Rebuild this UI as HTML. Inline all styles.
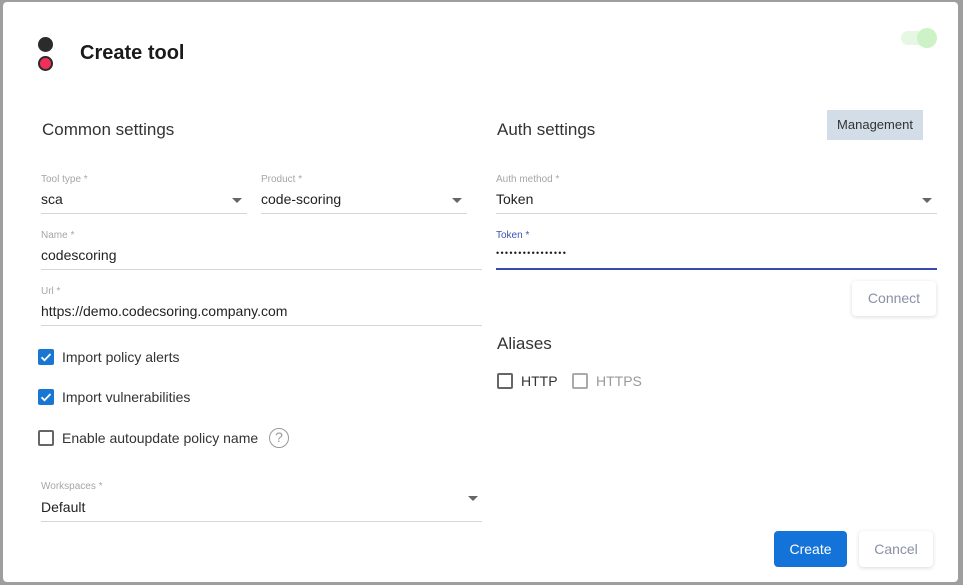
<!DOCTYPE html>
<html><head><style>
*{margin:0;padding:0;box-sizing:border-box}
body{width:963px;height:585px;background:#9e9e9e;font-family:"Liberation Sans",Roboto,sans-serif;position:relative;overflow:hidden}
.dlg{position:absolute;left:3px;top:2px;width:955px;height:580px;background:#fff;border-radius:4px}
.a{position:absolute}
.lbl{font-size:10px;color:#a6a6a6}
.val{font-size:14px;color:#222}
.ul{height:1px;background:#d6d6d6}
.arr{width:0;height:0;border-left:5px solid transparent;border-right:5px solid transparent;border-top:5px solid #666}
.h{font-size:17px;color:#333}
.cb{width:16px;height:16px;border-radius:2px}
.cbx{border:2px solid #666}
.cbon{background:#1976d2}
.t{font-size:14px;color:#333}
</style></head><body>
<div class="dlg"></div>
<div class="a" style="left:38px;top:37px;width:15px;height:15px;border-radius:50%;background:#2b2b2b"></div>
<div class="a" style="left:38px;top:56px;width:15px;height:15px;border-radius:50%;background:#f0305a;border:2px solid #2b2b2b"></div>
<div class="a" style="left:80px;top:42px;font-size:20px;font-weight:bold;color:#1a1a1a">Create tool</div>
<div class="a" style="left:901px;top:31px;width:30px;height:14px;border-radius:7px;background:#e6f7e3"></div>
<div class="a" style="left:917px;top:28px;width:20px;height:20px;border-radius:50%;background:#ccf2c6"></div>

<div class="a h" style="left:42px;top:120px">Common settings</div>
<div class="a h" style="left:497px;top:120px">Auth settings</div>
<div class="a" style="left:827px;top:110px;width:96px;height:30px;background:#d3dde8;font-size:13px;color:#333;text-align:center;line-height:30px">Management</div>

<div class="a lbl" style="left:41px;top:174px">Tool type *</div>
<div class="a val" style="left:41px;top:191px">sca</div>
<div class="a arr" style="left:232px;top:198px"></div>
<div class="a ul" style="left:41px;top:213px;width:206px"></div>
<div class="a lbl" style="left:261px;top:174px">Product *</div>
<div class="a val" style="left:261px;top:191px">code-scoring</div>
<div class="a arr" style="left:452px;top:198px"></div>
<div class="a ul" style="left:261px;top:213px;width:206px"></div>

<div class="a lbl" style="left:41px;top:230px">Name *</div>
<div class="a val" style="left:41px;top:247px">codescoring</div>
<div class="a ul" style="left:41px;top:269px;width:441px"></div>
<div class="a lbl" style="left:41px;top:286px">Url *</div>
<div class="a val" style="left:41px;top:303px">https://demo.codecsoring.company.com</div>
<div class="a ul" style="left:41px;top:325px;width:441px"></div>

<div class="a cb cbon" style="left:38px;top:349px"><svg width="16" height="16"><path d="M3.5 8.2l3 3 6-6.2" stroke="#fff" stroke-width="1.8" fill="none"/></svg></div>
<div class="a t" style="left:62px;top:349px">Import policy alerts</div>
<div class="a cb cbon" style="left:38px;top:389px"><svg width="16" height="16"><path d="M3.5 8.2l3 3 6-6.2" stroke="#fff" stroke-width="1.8" fill="none"/></svg></div>
<div class="a t" style="left:62px;top:389px">Import vulnerabilities</div>
<div class="a cb cbx" style="left:38px;top:430px"></div>
<div class="a t" style="left:62px;top:430px">Enable autoupdate policy name</div>
<div class="a" style="left:269px;top:428px;width:20px;height:20px;border-radius:50%;border:1.5px solid #999;color:#999;font-size:14px;text-align:center;line-height:17px">?</div>

<div class="a lbl" style="left:41px;top:481px">Workspaces *</div>
<div class="a val" style="left:41px;top:499px">Default</div>
<div class="a arr" style="left:468px;top:496px"></div>
<div class="a ul" style="left:41px;top:521px;width:441px"></div>

<div class="a lbl" style="left:496px;top:174px">Auth method *</div>
<div class="a val" style="left:496px;top:191px">Token</div>
<div class="a arr" style="left:922px;top:198px"></div>
<div class="a ul" style="left:496px;top:213px;width:441px"></div>
<div class="a lbl" style="left:496px;top:230px;color:#3f51b5">Token *</div>
<div class="a val" style="left:496px;top:247px;font-size:9px;letter-spacing:1.3px;line-height:12px">••••••••••••••••</div>
<div class="a" style="left:496px;top:268px;width:441px;height:2px;background:#3949ab"></div>
<div class="a" style="left:852px;top:281px;width:84px;height:35px;border-radius:4px;background:#fff;box-shadow:0 1px 4px rgba(0,0,0,.15);font-size:14px;color:#8a8fa8;text-align:center;line-height:35px">Connect</div>

<div class="a h" style="left:497px;top:334px">Aliases</div>
<div class="a cb cbx" style="left:497px;top:373px"></div>
<div class="a t" style="left:521px;top:373px">HTTP</div>
<div class="a cb cbx" style="left:572px;top:373px;border-color:#aaa"></div>
<div class="a t" style="left:596px;top:373px;color:#999">HTTPS</div>

<div class="a" style="left:774px;top:531px;width:73px;height:36px;border-radius:4px;background:#1473d8;color:#fff;font-size:14px;text-align:center;line-height:36px">Create</div>
<div class="a" style="left:859px;top:531px;width:74px;height:36px;border-radius:4px;background:#fff;box-shadow:0 1px 4px rgba(0,0,0,.15);color:#8a8fa8;font-size:14px;text-align:center;line-height:36px">Cancel</div>
</body></html>
